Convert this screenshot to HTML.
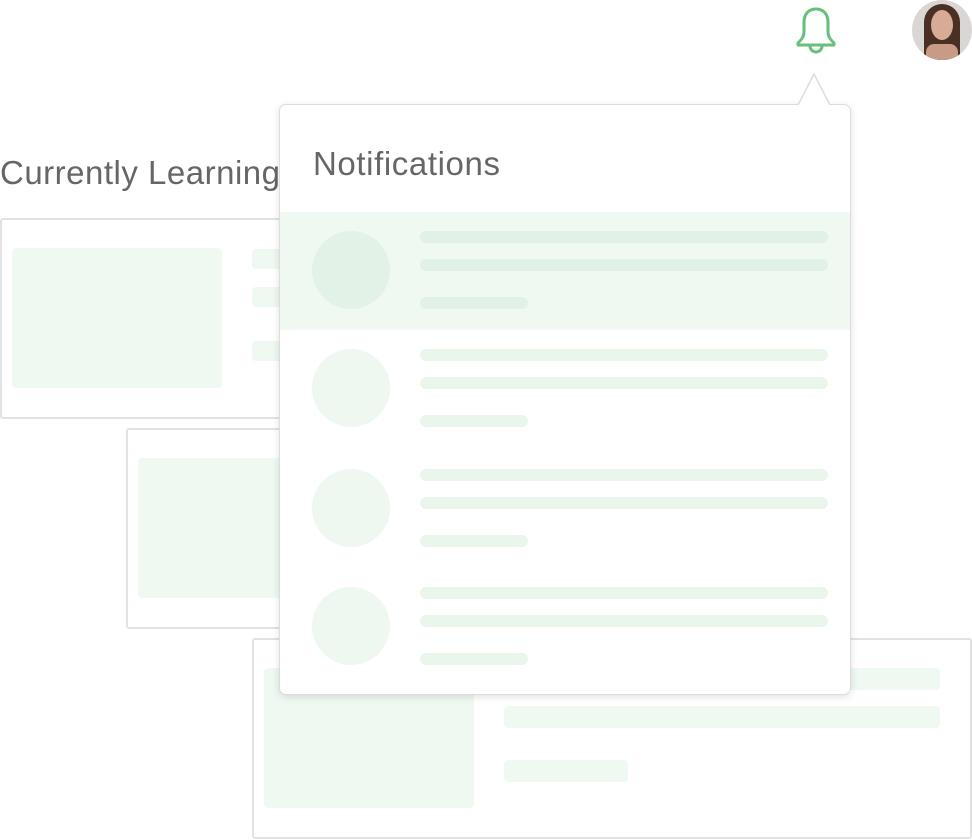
<!DOCTYPE html>
<html><head><style>
body{margin:0;width:972px;height:840px;background:#fff;position:relative;overflow:hidden;font-family:"Liberation Sans",sans-serif}
.a{position:absolute}
.card{position:absolute;border:2px solid #e2e2e2;border-radius:3px;background:#fff;box-sizing:border-box;width:720px;height:201px}
.g{position:absolute;background:#eff8f1;border-radius:4px}
.l{position:absolute;background:#eaf5ec;border-radius:6px;height:12px}
.h .l{background:#e2f1e5}
.c{position:absolute;width:78px;height:78px;border-radius:50%;background:#eef7f0;left:32px}
</style></head><body>
<div class="a" style="left:0;top:154px;font-size:33px;color:#666;letter-spacing:0.5px">Currently Learning</div>
<div class="card" style="left:0;top:218px">
<div class="g" style="left:10px;top:28px;width:210px;height:140px"></div>
<div class="g" style="left:250px;top:29px;width:436px;height:20px"></div>
<div class="g" style="left:250px;top:67px;width:436px;height:20px"></div>
<div class="g" style="left:250px;top:121px;width:124px;height:20px"></div>
</div>
<div class="card" style="left:126px;top:428px">
<div class="g" style="left:10px;top:28px;width:210px;height:140px"></div>
</div>
<div class="card" style="left:252px;top:638px">
<div class="g" style="left:10px;top:28px;width:210px;height:140px"></div>
<div class="g" style="left:250px;top:28px;width:436px;height:22px"></div>
<div class="g" style="left:250px;top:66px;width:436px;height:22px"></div>
<div class="g" style="left:250px;top:120px;width:124px;height:22px"></div>
</div>
<svg class="a" style="left:790px;top:4px" width="52" height="54" viewBox="0 0 52 54"><path d="M26 5c-8 0-12 6-12 13v10c0 5-3 8-6 11v2h36v-2c-3-3-6-6-6-11V18c0-7-4-13-12-13z" fill="none" stroke="#66bf7b" stroke-width="3" stroke-linejoin="round"/><path d="M20 42a6 6 0 0 0 12 0" fill="none" stroke="#66bf7b" stroke-width="3"/></svg>
<div class="a" style="left:912px;top:0;width:60px;height:60px;border-radius:50%;overflow:hidden;background:#d9d6d3">
<div class="a" style="left:12px;top:4px;width:36px;height:60px;border-radius:18px 18px 4px 4px;background:#4a3024"></div>
<div class="a" style="left:19px;top:10px;width:22px;height:30px;border-radius:50%;background:#d7ab96"></div>
<div class="a" style="left:14px;top:44px;width:32px;height:20px;border-radius:8px 8px 0 0;background:#c99a86"></div>
</div>
<div class="a" style="left:279px;top:104px;width:572px;height:591px;border:1px solid #ddd;border-radius:7px;box-sizing:border-box;background:#fff;box-shadow:0 2px 8px rgba(0,0,0,0.12);overflow:hidden">
<div class="a" style="left:33px;top:40px;font-size:33px;color:#666;letter-spacing:0.6px">Notifications</div>
<div class="a" style="left:0;top:107px;width:572px;height:118px;background:#f0f8f2"></div>
<div class="a" style="left:0;top:106px;width:572px">
<div class="h"><div class="c" style="top:20px;background:#e3f2e6"></div><div class="l" style="left:140px;top:20px;width:408px"></div><div class="l" style="left:140px;top:48px;width:408px"></div><div class="l" style="left:140px;top:86px;width:108px"></div></div>
<div class="c" style="top:138px"></div><div class="l" style="left:140px;top:138px;width:408px"></div><div class="l" style="left:140px;top:166px;width:408px"></div><div class="l" style="left:140px;top:204px;width:108px"></div>
<div class="c" style="top:258px"></div><div class="l" style="left:140px;top:258px;width:408px"></div><div class="l" style="left:140px;top:286px;width:408px"></div><div class="l" style="left:140px;top:324px;width:108px"></div>
<div class="c" style="top:376px"></div><div class="l" style="left:140px;top:376px;width:408px"></div><div class="l" style="left:140px;top:404px;width:408px"></div><div class="l" style="left:140px;top:442px;width:108px"></div>
</div></div>
<svg class="a" style="left:797px;top:72px" width="36" height="34"><path d="M1 33L17 2L33 33" fill="#fff" stroke="#ddd" stroke-width="1.5"/></svg>
</body></html>
